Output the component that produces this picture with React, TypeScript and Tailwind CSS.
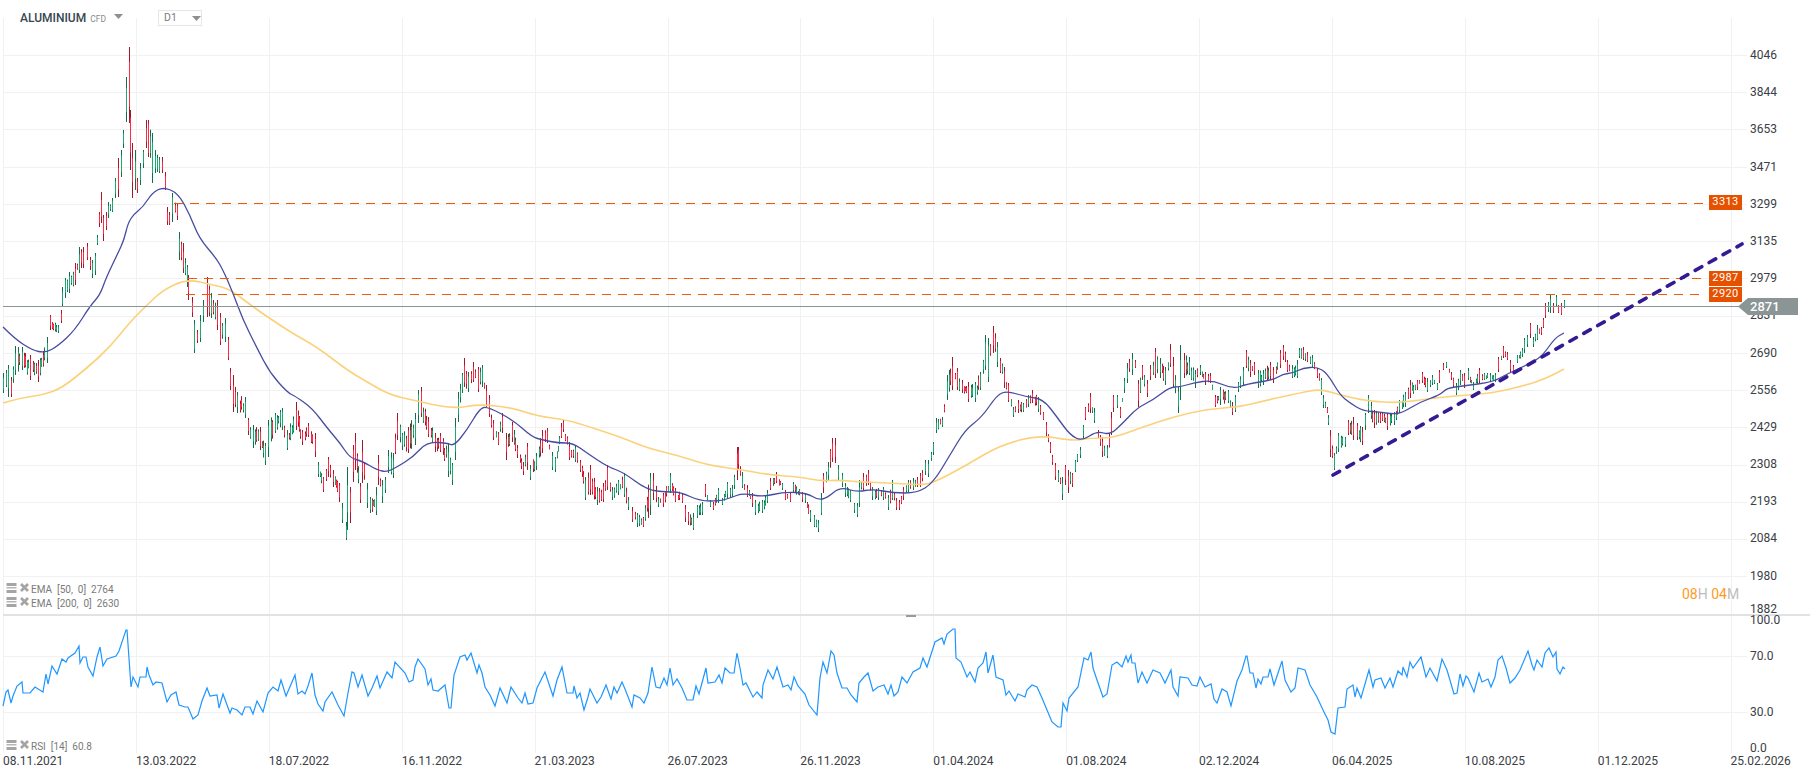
import React from 'react'

// [x, high y, low y] in page pixels, read off the chart
const bars: number[][] = [
    [3,373,393],[8,365,397],[11,377,397],[15,346,375],[22,347,370],[30,355,380],[38,360,382],[47,337,363],[50,315,330],[58,325,333],[61,310,323],[62,287,307],[65,278,298],[69,272,293],
    [75,263,285],[79,247,273],[83,247,268],[87,243,260],[90,257,270],[92,260,278],[95,253,275],[97,235,245],[99,212,227],[101,192,223],[103,215,241],[106,212,230],[108,202,218],[112,198,212],[115,178,198],[118,158,197],[121,150,177],[123,130,148],[126,77,122],[129,47,123],[130,110,170],[132,143,198],[135,150,190],[137,178,193],[140,163,185],[143,150,168],[146,120,148],[148,120,157],[152,133,183],[155,150,173],[159,157,173],[162,157,173],[165,172,190],[167,207,225],[169,212,225],[172,193,222],[177,203,220],[179,232,260],[183,243,273],[187,265,287],
    [188,275,300],[192,297,317],[194,320,353],[197,330,343],[200,315,342],[203,300,322],[207,277,317],[211,293,318],[217,300,330],[220,313,345],[225,318,342],[228,337,360],[230,368,390],[233,375,412],[237,392,413],[245,397,418],[248,418,435],[253,425,448],[260,427,450],[265,443,465],[268,420,457],[275,413,433],[282,408,430],[287,430,450],[296,402,430],[302,430,445],[308,423,437],[315,433,457],[318,462,477],[323,477,492],[328,457,477],[333,470,487],[339,483,502],[342,503,523],[346,522,540],[347,467,530],[350,487,523],[353,445,482],[355,433,470],[360,483,503],[362,440,483],[367,483,508],[370,497,513],[376,487,515],[378,455,485],[382,480,503],[385,477,493],[388,450,473],[393,453,478],[397,413,440],[402,433,450],[408,427,453],[415,413,445],[418,390,423],[421,387,417],[428,417,437],[435,433,452],[440,433,452],[448,443,477],[452,463,485],[455,418,460],[458,392,422],[462,373,393],[464,358,387],[468,372,392],[473,362,382],[478,367,392],[482,365,387],[486,385,407],[489,395,417],[493,420,440],[498,432,445],
    [502,413,433],[506,433,460],[512,422,442],[517,445,458],[523,462,475],[527,443,470],[530,465,480],[536,453,470],[542,430,453],[547,428,443],[552,452,470],[555,457,472],[561,423,438],[563,420,432],[569,442,460],[575,445,462],[580,460,472],[585,477,500],[590,465,495],[597,487,505],[603,483,502],[607,465,490],[612,487,500],[618,480,495],[624,473,497],[628,497,510],[632,507,522],[637,513,527],[643,517,527],[650,473,515],[653,473,500],[658,497,507],[663,493,507],[670,473,493],[675,488,502],[682,493,503],[685,505,522],[688,512,525],[693,513,530],[697,505,518],[702,502,515],[705,484,497],[710,500,507],[713,502,510],[718,488,503],[722,498,505],[727,482,498],[732,485,497],[737,447,480],[738,447,470],[742,472,488],[747,485,497],[752,493,507],[755,500,515],[762,500,513],[767,490,503],[770,478,490],[776,472,483],[782,483,490],[785,490,500],[790,493,502],[793,482,493],[802,492,502],[805,493,503],[810,510,522],[814,515,527],[818,520,532],[821,493,515],[823,473,493],[828,462,480],[832,438,462],[835,438,463],[838,465,480],[842,473,487],[845,483,497],[850,490,502],[854,503,513],[857,503,517],[859,480,507],[863,473,490],[868,470,485],[872,487,500],[878,488,500],[883,487,500],[888,495,510],[892,480,500],[896,498,510],[899,500,510],[903,487,500],[908,480,493],[913,478,490],[917,477,487],[920,473,487],[925,460,475],[928,460,477],
    [933,442,455],[936,418,433],[942,417,427],[947,375,400],[952,357,390],[957,368,390],[962,380,393],[968,382,402],[975,382,402],[980,372,390],[985,335,370],[988,338,382],[993,326,353],[997,342,367],[1000,358,373],[1004,367,388],[1008,383,402],[1013,407,417],[1018,400,413],[1023,403,412],[1028,395,407],[1032,390,403],[1038,397,412],[1043,412,420],[1046,422,437],[1050,442,453],[1055,463,480],[1058,470,482],[1062,477,500],[1065,465,485],[1068,470,493],[1072,473,487],[1075,460,472],[1080,447,458],[1083,425,440],[1085,407,420],[1090,393,413],[1094,408,423],[1098,430,438],[1102,437,457],[1107,445,458],[1111,412,435],[1113,395,412],[1117,395,408],[1120,407,418],[1124,378,393],[1127,363,383],[1132,353,375],[1135,360,368],[1138,380,407],[1142,365,380],[1147,380,397],[1150,365,380],[1155,348,378],[1160,358,378],[1165,367,385],[1170,344,367],[1173,357,388],[1178,387,413],[1180,345,400],[1184,353,378],[1189,357,375],[1195,370,388],[1200,365,375],[1205,372,385],[1210,373,383],[1215,395,407],[1220,387,405],[1228,390,403],[1232,402,415],[1235,395,412],[1238,382,392],[1243,367,385],[1246,350,368],[1250,360,377],[1254,362,375],[1258,370,388],[1263,370,385],[1270,362,380],[1273,367,383],[1280,350,368],[1283,345,360],[1287,360,372],[1292,365,378],[1297,360,378],[1299,348,358],[1303,347,360],[1307,352,362],[1312,355,367],[1317,368,378],[1321,378,395],[1323,395,408],[1327,407,413],[1328,415,425],
    [1330,430,457],[1334,453,470],[1338,433,452],[1345,437,447],[1348,420,435],[1353,417,440],[1357,423,440],[1362,427,445],[1365,413,430],[1368,395,413],[1374,410,428],[1380,412,423],[1387,413,430],[1394,412,425],[1399,400,413],[1405,392,407],[1410,380,398],[1417,380,390],[1422,372,383],[1427,378,392],[1432,375,385],[1437,383,390],[1439,370,383],[1443,363,370],[1446,362,368],[1451,372,380],[1456,383,395],[1460,370,385],[1464,373,388],[1468,368,380],[1473,382,390],[1479,368,383],[1484,373,380],[1490,373,382],[1495,373,382],[1498,357,372],[1503,346,358],[1507,352,360],[1510,360,372],[1513,365,372],[1517,355,363],[1522,348,357],[1524,338,353],[1527,335,347],[1530,323,338],[1533,337,347],[1537,325,340],[1541,327,335],[1543,318,328],[1545,303,318],[1548,302,312],[1550,295,313],[1553,303,313],[1556,295,307],[1558,305,313],[1561,303,315],[1564,300,308],
]

const ema50 = '3,327 15,339 32,350 45,353 58,346 75,330 90,306 100,295 106,278 118,253 124,240 128,223 134,214 143,207 152,193 163,187 178,193 190,215 199,238 216,258 223,270 233,293 243,320 257,348 270,373 288,393 295,396 312,408 328,429 340,443 350,458 362,461 377,470 387,472 397,467 413,457 427,442 447,443 454,446 467,430 480,408 488,407 513,420 532,437 543,440 558,443 573,443 587,453 608,467 623,472 647,490 667,492 680,492 700,501 720,501 730,498 743,493 763,497 783,492 807,493 818,500 827,498 840,487 857,492 873,489 893,493 917,493 933,483 950,455 965,430 982,417 997,395 1007,391 1027,397 1043,399 1057,417 1070,435 1082,441 1097,431 1110,435 1123,423 1137,408 1153,400 1170,387 1180,387 1193,383 1212,380 1233,389 1247,384 1273,380 1283,374 1293,373 1303,368 1317,367 1327,373 1340,395 1350,403 1363,411 1380,412 1392,414 1402,413 1420,402 1440,395 1447,388 1463,386 1493,382 1507,374 1533,362 1543,355 1555,338 1564,333'

const ema200 = '3,403 20,398 43,395 62,388 87,368 110,347 130,322 147,305 163,290 187,279 213,285 230,289 253,307 290,332 317,347 347,370 367,382 390,395 417,401 453,409 480,404 513,408 537,416 567,420 590,427 623,438 647,448 680,456 707,465 743,470 770,475 800,477 820,481 840,480 860,482 893,483 920,485 933,483 967,465 1000,445 1040,435 1073,441 1090,438 1113,438 1140,428 1173,417 1207,409 1240,407 1267,400 1300,393 1320,389 1340,395 1367,401 1400,403 1433,398 1467,395 1493,393 1527,385 1547,378 1564,369'

const rsi = '3,706 6,692 8,690 11,703 13,696 17,686 22,682 23,693 30,693 35,687 43,692 46,674 48,684 52,666 57,674 62,659 66,662 68,658 75,653 79,646 80,663 83,657 86,657 88,667 93,676 97,657 100,647 103,666 107,659 116,656 119,651 126,630 127,630 131,687 133,677 138,687 140,677 146,677 147,667 149,675 153,685 156,682 162,683 167,702 171,695 176,692 179,705 185,707 188,707 193,719 198,715 202,701 207,688 210,696 217,695 219,708 223,694 230,713 232,708 237,710 242,715 245,707 250,707 253,714 257,701 263,712 268,693 273,687 278,691 281,680 286,696 295,675 298,694 302,691 305,694 308,686 312,673 315,695 318,704 323,711 325,702 332,692 338,705 344,716 348,693 352,672 354,673 358,687 362,675 368,696 372,688 377,676 380,688 387,672 392,678 395,662 405,673 409,682 413,680 415,667 418,659 425,669 428,685 431,679 433,690 438,691 445,685 449,708 451,708 454,675 460,657 465,655 467,660 471,653 477,673 479,665 482,673 485,687 490,695 495,706 500,688 507,703 511,687 518,698 522,703 525,693 528,704 533,703 537,688 545,672 553,696 557,680 562,667 567,693 573,693 574,686 577,698 580,693 584,710 588,697 590,689 597,703 601,697 606,685 611,699 614,687 617,693 622,682 625,689 632,707 634,695 640,698 644,703 648,693 652,667 656,687 660,688 664,678 667,685 670,668 673,685 677,679 682,688 687,700 693,700 696,686 699,694 706,668 708,683 715,682 719,675 722,683 725,668 730,673 734,673 737,653 740,668 743,685 746,683 753,697 757,692 762,698 763,685 768,670 773,679 777,667 783,687 788,685 791,690 794,677 798,686 805,694 809,705 817,715 820,678 823,662 827,673 831,651 834,655 837,673 842,688 847,688 851,695 857,702 859,683 864,677 868,673 873,691 878,687 884,685 888,694 891,685 894,696 898,692 902,677 907,683 913,672 920,668 923,658 927,667 935,642 942,638 944,644 947,634 953,629 955,629 956,658 961,662 967,677 970,672 975,682 978,668 983,663 986,652 988,673 993,655 996,677 1003,680 1006,695 1009,691 1015,701 1018,694 1025,697 1027,690 1032,685 1037,687 1042,698 1047,710 1052,722 1058,727 1061,727 1063,703 1067,711 1069,698 1078,687 1084,658 1088,660 1091,652 1093,668 1097,680 1103,697 1107,694 1112,665 1117,662 1122,667 1126,656 1128,662 1131,655 1132,663 1135,663 1138,683 1142,672 1147,683 1153,670 1160,673 1165,683 1171,670 1173,687 1178,696 1180,677 1188,678 1192,685 1197,686 1200,677 1205,687 1211,684 1214,699 1217,703 1222,689 1227,692 1231,706 1237,681 1242,670 1246,656 1247,656 1250,673 1253,673 1256,688 1258,679 1261,684 1263,677 1268,677 1270,669 1274,685 1282,661 1285,680 1291,692 1295,688 1298,668 1305,670 1310,685 1317,697 1323,710 1328,720 1331,732 1335,734 1338,708 1345,707 1347,689 1353,685 1355,697 1357,688 1361,698 1369,670 1373,687 1375,680 1381,678 1385,688 1390,678 1393,687 1398,671 1402,675 1403,667 1407,677 1410,662 1413,668 1421,657 1426,677 1430,668 1437,681 1442,659 1447,670 1454,694 1457,693 1460,674 1463,686 1466,676 1468,678 1474,692 1479,673 1482,682 1488,679 1491,687 1495,677 1498,660 1502,656 1506,668 1510,683 1515,678 1520,670 1528,651 1532,665 1534,670 1537,660 1542,667 1545,653 1549,648 1553,657 1556,652 1557,669 1560,674 1563,667 1565,669'

const priceLabels = ['4046', '3844', '3653', '3471', '3299', '3135', '2979', '2831', '2690', '2556', '2429', '2308', '2193', '2084', '1980']
const priceGrid = [55, 92, 129, 167, 204, 241, 278, 316, 353, 390, 427, 465, 502, 539, 576]
const dates = ['08.11.2021', '13.03.2022', '18.07.2022', '16.11.2022', '21.03.2023', '26.07.2023', '26.11.2023', '01.04.2024', '01.08.2024', '02.12.2024', '06.04.2025', '10.08.2025', '01.12.2025', '25.02.2026']
const timeGrid = dates.map((_, i) => Math.round(3 + i * 132.9) + 0.5)

// Small seeded generator so the candles stay the same on every load
let seed = 20251
const rnd = () => {
    seed = (seed * 16807) % 2147483647
    return seed / 2147483647
}

const buildCandles = () => {
    const list: { x: number; top: number; bottom: number }[] = bars.map(b => ({ x: b[0], top: b[1], bottom: b[2] }))
    for (let x = 3; x < 1564; x += 1.48) {
        if (bars.some(b => Math.abs(b[0] - x) < 1.5)) continue
        const next = bars.findIndex(b => b[0] > x)
        if (next < 1) continue
        const a = bars[next - 1]
        const b = bars[next]
        const t = (x - a[0]) / (b[0] - a[0])
        const hi = a[1] + (b[1] - a[1]) * t
        const lo = a[2] + (b[2] - a[2]) * t
        const range = lo - hi
        list.push({ x: Math.round(x), top: hi + rnd() * range * 0.4, bottom: lo - rnd() * range * 0.4 })
    }
    list.sort((a, b) => a.x - b.x)

    const paths = { wickUp: '', wickDown: '', bodyUp: '', bodyDown: '' }
    list.forEach((c, i) => {
        const h = c.bottom - c.top
        const bodyTop = c.top + h * (0.1 + rnd() * 0.2)
        const bodyBottom = c.bottom - h * (0.1 + rnd() * 0.2)
        const x = Math.round(c.x) + 0.5
        const wick = `M${x} ${c.top.toFixed(1)}V${c.bottom.toFixed(1)}`
        const body = `M${x} ${bodyTop.toFixed(1)}V${bodyBottom.toFixed(1)}`
        // price going up over the next few bars means more green
        const later = list[Math.min(i + 3, list.length - 1)]
        const rising = later.top + later.bottom < c.top + c.bottom
        const spike = c.x >= 127 && c.x <= 132
        if (!spike && rnd() < (rising ? 0.68 : 0.32)) {
            paths.wickUp += wick
            paths.bodyUp += body
        } else {
            paths.wickDown += wick
            paths.bodyDown += body
        }
    })
    return paths
}

const candles = buildCandles()

// Rounds the traced points through their midpoints
const smooth = (points: string) => {
    const pts = points.split(' ').map(p => p.split(',').map(Number))
    let d = `M${pts[0][0]} ${pts[0][1]}`
    for (let i = 1; i < pts.length - 1; i++) {
        const mx = (pts[i][0] + pts[i + 1][0]) / 2
        const my = (pts[i][1] + pts[i + 1][1]) / 2
        d += `Q${pts[i][0]} ${pts[i][1]} ${mx} ${my}`
    }
    const last = pts[pts.length - 1]
    return `${d}L${last[0]} ${last[1]}`
}

const LegendIcons: React.FC = () => (
    <span className="mb-[5px] flex items-center gap-[3px]">
        <svg width="11" height="10" viewBox="0 0 11 10">
            <rect x="0.5" y="0" width="10" height="3" fill="#a5a5a5" />
            <rect x="0.5" y="4" width="10" height="1.5" fill="#b5b5b5" />
            <rect x="0.5" y="7" width="10" height="3" fill="#a5a5a5" />
        </svg>
        <svg width="9" height="9" viewBox="0 0 9 9">
            <path d="M1 1 L8 8 M8 1 L1 8" stroke="#a5a5a5" strokeWidth="2.8" />
        </svg>
    </span>
)

const Caret: React.FC<{ className: string }> = ({ className }) => (
    <svg className={className} width="9" height="5" viewBox="0 0 9 5">
        <path d="M0 0 H9 L4.5 5 Z" fill="#8f8f8f" />
    </svg>
)

const App: React.FC = () => {
    return (
        <div className="relative w-[1810px] h-[779px] overflow-hidden bg-white font-['Roboto',sans-serif] text-[12px] text-[#3a4045]">
            {/* Price chart */}
            <div className="flex h-[614px]">
                <svg width="1747" height="614" className="shrink-0">
                    {priceGrid.map(y => (
                        <line key={y} x1="3" x2="1747" y1={y + 0.5} y2={y + 0.5} stroke="#f1f1f3" />
                    ))}
                    {timeGrid.map(x => (
                        <line key={x} x1={x} x2={x} y1="18" y2="614" stroke="#f1f1f3" />
                    ))}
                    <path d={candles.wickUp} stroke="#0f6f4a" fill="none" />
                    <path d={candles.wickDown} stroke="#a5152c" fill="none" />
                    <path d={candles.bodyUp} stroke="#1fa971" fill="none" />
                    <path d={candles.bodyDown} stroke="#ff2b45" fill="none" />
                    <path d={smooth(ema200)} fill="none" stroke="#fbd27c" strokeWidth="1.7" />
                    <path d={smooth(ema50)} fill="none" stroke="#474c9f" strokeWidth="1.3" />
                    <line x1="3" x2="1740" y1="306.5" y2="306.5" stroke="#8a9597" />
                    <line x1="174" x2="1706" y1="203.5" y2="203.5" stroke="#ee5a0a" strokeWidth="1.2" strokeDasharray="9 7" />
                    <line x1="188" x2="1706" y1="278.5" y2="278.5" stroke="#ee5a0a" strokeWidth="1.2" strokeDasharray="9 7" />
                    <line x1="186" x2="1706" y1="294.5" y2="294.5" stroke="#ee5a0a" strokeWidth="1.2" strokeDasharray="9 7" />
                    <line x1="1333" y1="475" x2="1742" y2="244" stroke="#341b94" strokeWidth="3.6" strokeLinecap="round" strokeDasharray="7.5 8.5" />
                </svg>
                <div className="flex flex-col pt-[48px] pl-[3px]">
                    {priceLabels.map(p => (
                        <div key={p} className="h-[37.2px] shrink-0 leading-[14px]">{p}</div>
                    ))}
                    <div className="-mt-[4px] shrink-0 leading-[14px]">1882</div>
                </div>
            </div>

            {/* Pane divider */}
            <div className="ml-[3px] h-[2px] bg-[#e2e2e2]" />

            {/* RSI pane */}
            <div className="flex h-[137px]">
                <svg width="1747" height="137" className="shrink-0">
                    {[656, 712, 753].map(y => (
                        <line key={y} x1="3" x2={y === 753 ? 1742 : 1747} y1={y - 615.5} y2={y - 615.5} stroke="#f1f1f3" />
                    ))}
                    {timeGrid.map(x => (
                        <line key={x} x1={x} x2={x} y1="0" y2="137" stroke="#f1f1f3" />
                    ))}
                    <polyline points={rsi} transform="translate(0 -616)" fill="none" stroke="#1e96ff" strokeWidth="1.2" />
                </svg>
                <div className="flex flex-col pl-[3px] leading-[14px]">
                    <div className="-mt-[3px]">100.0</div>
                    <div className="mt-[22px]">70.0</div>
                    <div className="mt-[42px]">30.0</div>
                    <div className="mt-[22px]">0.0</div>
                </div>
            </div>

            {/* Date axis */}
            <div className="flex pl-[3px] pt-[1px] leading-[14px]">
                {dates.map(d => (
                    <div key={d} className="w-[132.9px] shrink-0">{d}</div>
                ))}
            </div>

            {/* Instrument header */}
            <div className="absolute left-[20px] top-[10px] flex h-[16px] items-center">
                <span className="text-[12px] font-medium text-[#37474f]">ALUMINIUM</span>
                <span className="ml-[4px] mt-[2px] text-[8.5px] text-[#8a8a8a]">CFD</span>
                <Caret className="ml-[8px] -mt-[3px]" />
                <div className="ml-[35px] flex h-[16px] w-[44px] items-center border border-[#e6e6e6] pl-[5px] text-[10.5px] text-[#7d7d7d]">
                    D1
                    <Caret className="ml-[15px]" />
                </div>
            </div>

            {/* Indicator legends */}
            <div className="absolute left-[6px] top-[583px] flex flex-col text-[10px] leading-[14px] text-[#7a7a7a]">
                <div className="flex h-[14px] items-center gap-[2px] whitespace-pre"><LegendIcons /><span>EMA  [50,  0]  2764</span></div>
                <div className="flex h-[14px] items-center gap-[2px] whitespace-pre"><LegendIcons /><span>EMA  [200,  0]  2630</span></div>
            </div>
            <div className="absolute left-[6px] top-[740px] flex h-[14px] items-center gap-[2px] whitespace-pre text-[10px] leading-[14px] text-[#7a7a7a]">
                <LegendIcons /><span>RSI  [14]  60.8</span>
            </div>

            {/* Level tags */}
            <div className="absolute left-[1709px] top-[195px] flex h-[15px] w-[33px] items-center justify-center bg-[#e65100] text-[11px] tracking-[0.4px] text-white">3313</div>
            <div className="absolute left-[1709px] top-[271px] flex h-[15px] w-[33px] items-center justify-center bg-[#e65100] text-[11px] tracking-[0.4px] text-white">2987</div>
            <div className="absolute left-[1709px] top-[287px] flex h-[15px] w-[33px] items-center justify-center bg-[#e65100] text-[11px] tracking-[0.4px] text-white">2920</div>

            {/* Current price */}
            <div className="absolute left-[1738px] top-[298px] flex h-[17px] items-center">
                <svg width="10" height="17" viewBox="0 0 10 17" className="shrink-0">
                    <path d="M0 8.5 L10 0 V17 Z" fill="#8b9596" />
                </svg>
                <div className="flex h-[17px] w-[50px] items-center bg-[#8b9596] pl-[2px] text-[13px] font-medium text-white">2871</div>
            </div>

            {/* Session countdown */}
            <div className="absolute left-[1682px] top-[586px] text-[14px] leading-[16px] text-[#bdbdbd]">
                <span className="text-[#ff9a1f]">08</span>H <span className="text-[#ff9a1f]">04</span>M
            </div>

            {/* Pane resize handle */}
            <div className="absolute left-[906px] top-[615px] h-[2px] w-[10px] bg-[#9a9a9a]" />
        </div>
    )
}

export default App
